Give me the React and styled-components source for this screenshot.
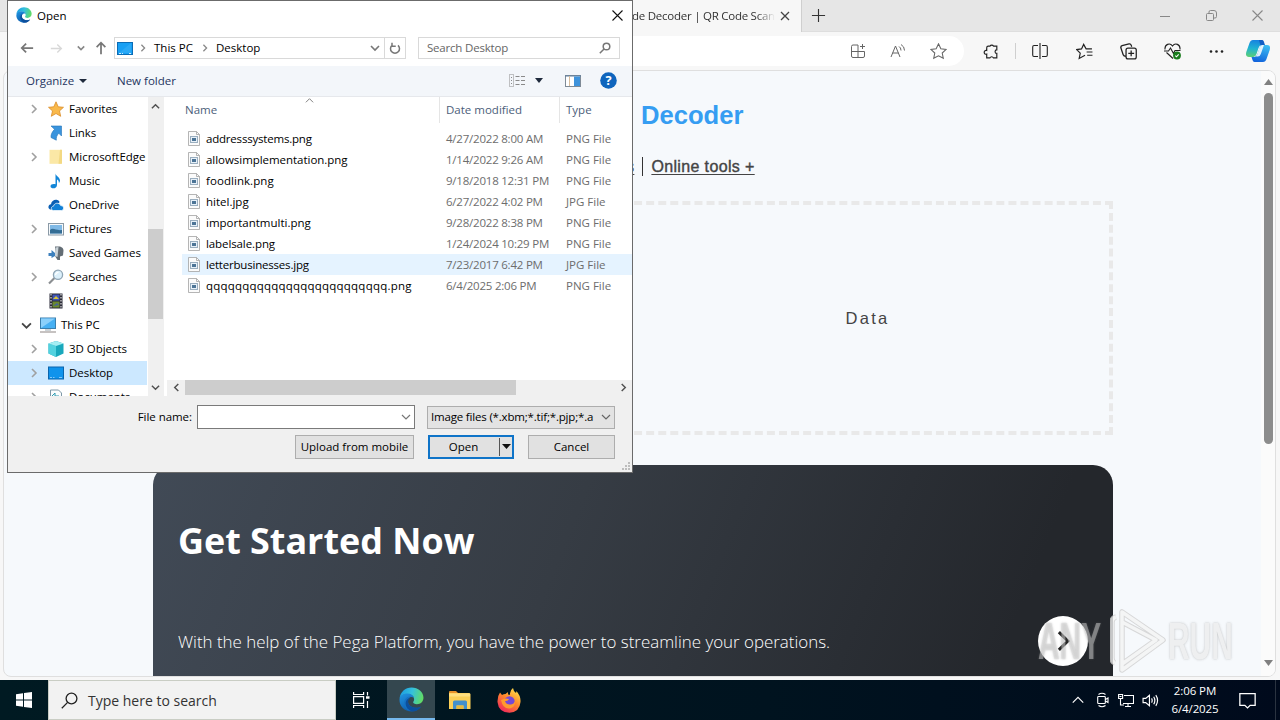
import React from "react";
import styled, { createGlobalStyle } from "styled-components";

const GlobalStyle = createGlobalStyle`
    * {
        box-sizing: border-box;
    }

    body {
        margin: 0;
        overflow: hidden;
        font-family: "Open Sans", "Noto Sans", sans-serif;
    }

    svg {
        display: block;
        flex: none;
    }
`;

const Screen = styled.div`
    position: relative;
    display: flex;
    flex-direction: column;
    width: 1280px;
    height: 720px;
    overflow: hidden;
    background: #f7f7f7;
`;

/* ---------- browser ---------- */

const Browser = styled.div`
    height: 680px;
    display: flex;
    flex-direction: column;
`;

const TabStrip = styled.div`
    height: 32px;
    display: flex;
    background: #e6e6e6;
    border-bottom: 1px solid #dedede;
`;

const Tab = styled.div`
    display: flex;
    align-items: center;
    height: 32px;
    width: 256px;
    margin-left: 546px;
    padding-left: 86px;
    background: #f7f7f7;
    border-right: 1px solid #cfcfcf;
    border-radius: 8px 0 0 0;
`;

const TabTitle = styled.span`
    width: 143px;
    margin-right: 5px;
    padding-bottom: 1px;
    white-space: nowrap;
    font-size: 11.5px;
    letter-spacing: -0.25px;
    color: #333;
    -webkit-mask-image: linear-gradient(90deg, #000 125px, transparent 143px);
    mask-image: linear-gradient(90deg, #000 125px, transparent 143px);
`;

const NewTab = styled.div`
    width: 32px;
    display: flex;
    align-items: center;
    justify-content: center;
`;

const WindowControls = styled.div`
    margin-left: auto;
    display: flex;
`;

const Cell = styled.div`
    width: ${(props) => props.$width || 44}px;
    margin-left: ${(props) => props.$gap || 0}px;
    flex: none;
    display: flex;
    align-items: center;
    justify-content: center;
`;

const Toolbar = styled.div`
    height: 38px;
    display: flex;
    align-items: center;
    background: #f7f7f7;
`;

const AddressBar = styled.div`
    height: 30px;
    width: 834px;
    margin: 0 5px 0 130px;
    padding-right: 6px;
    display: flex;
    align-items: center;
    justify-content: flex-end;
    background: #fff;
    border-radius: 15px;
`;

const Divider = styled.div`
    width: 1px;
    height: 16px;
    margin: 0 2px;
    background: #cfcfcf;
`;

const Page = styled.div`
    width: 1273px;
    height: 607px;
    margin-left: 3px;
    display: flex;
    overflow: hidden;
    background: #f6f9fc;
    border: 1px solid #dfdfdf;
    border-radius: 8px;
`;

const Content = styled.main`
    width: 960px;
    margin-left: 149px;
    margin-right: auto;
    display: flex;
    flex-direction: column;
    font-family: "Liberation Sans", Arial, sans-serif;
`;

const Heading = styled.h1`
    margin: 29px 0 0;
    padding-left: 488px;
    font-size: 25.6px;
    line-height: 30px;
    color: #359df2;
`;

const Links = styled.nav`
    display: flex;
    align-items: center;
    height: 20px;
    margin-top: 27px;
    padding-left: 473px;
    font-size: 16px;
    letter-spacing: 0.36px;
    -webkit-text-stroke: 0.4px #444;
    color: #444;
`;

const Link = styled.span`
    text-decoration: underline;
    text-underline-offset: 2px;
`;

const Bar = styled.span`
    width: 1px;
    height: 19px;
    margin: 0 8px;
    background: #333;
`;

const DropZone = styled.div`
    width: 491px;
    height: 234px;
    flex: none;
    margin: 25px 0 0 469px;
    display: flex;
    align-items: center;
    justify-content: center;
    border: 4px dashed #e9e9e9;
    font-size: 16.5px;
    letter-spacing: 2.3px;
    color: #444;
`;

const Card = styled.section`
    height: 230px;
    flex: none;
    margin-top: 30px;
    display: flex;
    flex-direction: column;
    padding: 51px 25px 0;
    background: linear-gradient(112deg, #414a56 0%, #363c44 42%, #24272c 88%);
    border-radius: 20px 20px 0 0;
    font-family: "Open Sans", sans-serif;
    color: #fff;
`;

const CardTitle = styled.h2`
    margin: 0;
    font-size: 35.9px;
    line-height: 50px;
`;

const CardRow = styled.div`
    height: 50px;
    margin-top: 50px;
    display: flex;
    align-items: center;
    justify-content: space-between;
    font-size: 16.92px;
    font-weight: 300;
    color: #fff;
`;

const NextButton = styled.div`
    width: 50px;
    height: 50px;
    display: flex;
    align-items: center;
    justify-content: center;
    background: #fff;
    border-radius: 50%;
`;

const PageScroll = styled.div`
    width: 14px;
    display: flex;
    flex-direction: column;
    align-items: center;
    justify-content: space-between;
    padding: 8px 0 10px;
    background: #fbfbfb;
`;

const PageThumb = styled.div`
    width: 9px;
    height: 351px;
    margin: 8px 0 auto;
    background: #8c8c8c;
    border-radius: 5px;
`;

/* ---------- file dialog ---------- */

const Dialog = styled.div`
    position: absolute;
    left: 7px;
    top: 0;
    width: 626px;
    height: 473px;
    display: flex;
    flex-direction: column;
    background: #fff;
    border: 1px solid #6b6b6b;
    font-size: 11.5px;
    color: #000;
    white-space: nowrap;
`;

const DialogTitle = styled.div`
    height: 29px;
    padding: 0 9px 1px 8px;
    display: flex;
    align-items: center;
    gap: 5px;

    svg:last-child {
        margin-left: auto;
    }
`;

const PathRow = styled.div`
    height: 36px;
    display: flex;
    padding: 7px 12px 0;
`;

const Arrows = styled.div`
    width: 94px;
    height: 22px;
    flex: none;
    display: flex;
    align-items: center;
`;

const PathBox = styled.div`
    width: 292px;
    height: 22px;
    display: flex;
    align-items: center;
    padding-left: 2px;
    border: 1px solid #d9d9d9;
`;

const Crumb = styled.span`
    width: ${(props) => props.$width}px;
    padding: 0 0 1px 1px;
`;

const Refresh = styled.div`
    width: 20px;
    height: 20px;
    margin-left: 4px;
    display: flex;
    align-items: center;
    justify-content: center;
    border-left: 1px solid #d9d9d9;
`;

const SearchBox = styled.div`
    width: 202px;
    height: 22px;
    margin-left: 12px;
    padding: 0 8px 1px 8px;
    display: flex;
    align-items: center;
    justify-content: space-between;
    border: 1px solid #d9d9d9;
    letter-spacing: -0.2px;
    color: #666;
`;

const CommandBar = styled.div`
    height: 31px;
    display: flex;
    align-items: center;
    padding: 0 15px 1px 18px;
    background: #f3f6fa;
    border-bottom: 1px solid #e6e8ec;
    color: #1e3560;
`;

const Command = styled.span`
    display: flex;
    align-items: center;
    gap: 5px;
    width: ${(props) => props.$width}px;
`;

const CommandIcons = styled.div`
    margin-left: auto;
    display: flex;
    align-items: center;
`;

const Panels = styled.div`
    height: 299px;
    display: flex;
`;

const Tree = styled.div`
    width: 139px;
    overflow: hidden;
`;

const TreeRow = styled.div`
    height: 24px;
    display: flex;
    align-items: center;
    padding-left: ${(props) => (props.$root ? 13 : 21)}px;
    background: ${(props) => (props.$active ? "#cce8ff" : "transparent")};
`;

const Caret = styled.span`
    width: 19px;
    display: flex;
`;

const TreeLabel = styled.span`
    margin-left: 5px;
    padding-bottom: 2px;
    letter-spacing: -0.04px;
`;

const TreeScroll = styled.div`
    width: 16px;
    margin-left: 1px;
    padding: 5px 1px 4px 0;
    display: flex;
    flex-direction: column;
    align-items: center;
    justify-content: space-between;
    background: #f0f0f0;
`;

const TreeThumb = styled.div`
    width: 15px;
    height: 90px;
    margin-top: 118px;
    margin-bottom: auto;
    background: #cdcdcd;
`;

const Files = styled.div`
    flex: 1;
    display: flex;
    flex-direction: column;
    margin-left: 3px;
`;

const FileHead = styled.div`
    height: 25px;
    margin-bottom: 6px;
    display: grid;
    grid-template-columns: 273px 120px 1fr;
    line-height: 26px;
    color: #4c607a;
`;

const HeadCell = styled.div`
    display: flex;
    padding-left: ${(props) => props.$pad || 6}px;
    border-right: 1px solid ${(props) => (props.$last ? "transparent" : "#e5e5e5")};

    svg {
        margin: -1px 0 0 88px;
    }
`;

const FileRow = styled.div`
    height: 21px;
    margin-left: 15px;
    padding-left: 6px;
    display: grid;
    grid-template-columns: 18px 240px 120px 1fr;
    align-items: center;
    background: ${(props) => (props.$hover ? "#e5f3ff" : "transparent")};
`;

const FileName = styled.span`
    letter-spacing: ${(props) => props.$spacing || 0}px;
`;

const Meta = styled.span`
    letter-spacing: ${(props) => props.$spacing || 0}px;
    color: #6d6d6d;
`;

const FileScroll = styled.div`
    height: 16px;
    margin-top: auto;
    padding: 0 4px 1px 5px;
    display: flex;
    align-items: center;
    justify-content: space-between;
    background: #f0f0f0;
`;

const FileThumb = styled.div`
    width: 331px;
    height: 15px;
    margin-right: auto;
    margin-left: 4px;
    background: #cdcdcd;
`;

const Footer = styled.div`
    position: relative;
    flex: 1;
    padding: 9px 17px 0 0;
    display: flex;
    flex-direction: column;
    align-items: flex-end;
    gap: 6px;
    background: #f0f0f0;
`;

const FooterRow = styled.div`
    display: flex;
    align-items: center;
    line-height: 20px;
`;

const FieldLabel = styled.span`
    letter-spacing: -0.05px;
`;

const NameInput = styled.div`
    width: 218px;
    height: 24px;
    margin: 0 12px 0 5px;
    padding-right: 3px;
    display: flex;
    align-items: center;
    justify-content: flex-end;
    background: #fff;
    border: 1px solid #7a7a7a;
`;

const TypeSelect = styled.div`
    width: 188px;
    height: 23px;
    padding: 0 3px 0 3px;
    display: flex;
    align-items: center;
    justify-content: space-between;
    background: #e3e3e3;
    border: 1px solid #adadad;
    letter-spacing: -0.18px;
`;

const Button = styled.div`
    width: ${(props) => props.$width}px;
    height: 24px;
    margin-left: 14px;
    padding-bottom: 1px;
    display: flex;
    align-items: center;
    justify-content: center;
    background: #e1e1e1;
    border: ${(props) => (props.$primary ? "2px solid #0f74c8" : "1px solid #adadad")};
`;

const OpenLabel = styled.span`
    width: 70px;
    padding-right: 2px;
    text-align: center;
`;

const SplitArrow = styled.span`
    height: 18px;
    width: 13px;
    display: flex;
    align-items: center;
    justify-content: center;
    border-left: 1px solid #555;
`;

const Grip = styled.svg`
    position: absolute;
    right: 1px;
    bottom: 1px;
`;

/* ---------- taskbar ---------- */

const Taskbar = styled.div`
    height: 40px;
    display: flex;
    background: linear-gradient(90deg, #001a22, #00131f 60%, #000a1c);
    color: #fff;
`;

const TaskSearch = styled.div`
    width: 288px;
    display: flex;
    align-items: center;
    gap: 10px;
    padding-left: 12px;
    background: #f2f2f2;
    border: 1px solid #c9cdc4;
    font-size: 14px;
    color: #333;
`;

const TaskButton = styled.div`
    width: ${(props) => props.$width || 49}px;
    height: 40px;
    display: flex;
    align-items: center;
    justify-content: center;
    background: ${(props) => (props.$active ? "#34474f" : "transparent")};
    border-bottom: ${(props) => (props.$active ? "2px solid #76b9ed" : "none")};
`;

const Tray = styled.div`
    margin-left: auto;
    padding-right: 4px;
    margin-right: 4px;
    height: 40px;
    display: flex;
    align-items: center;
    border-right: 1px solid #2a3340;
`;

const Clock = styled.div`
    width: 66px;
    text-align: center;
    font-size: 11.5px;
    line-height: 18px;
    letter-spacing: -0.1px;
`;

const Watermark = styled.div`
    position: absolute;
    left: 1038px;
    top: 608px;
    display: flex;
    align-items: center;
    opacity: 0.78;
`;

const Word = styled.span`
    width: ${(props) => props.$width}px;
    height: 66px;
    line-height: 67px;
    font-family: "Liberation Sans", Arial, sans-serif;
    font-size: 52px;
    font-weight: bold;
    transform: scaleX(0.575);
    transform-origin: 0 50%;
    color: ${(props) => props.$color};
    text-shadow: 0 0 3px rgba(110, 110, 110, 0.55);
`;

/* ---------- icons ---------- */

const Stroke = ({ size = 16, color = "#333", w = 1, d, box = 16 }) => (
    <svg width={size} height={size} viewBox={`0 0 ${box} ${box}`} fill="none" stroke={color} strokeWidth={w}>
        <path d={d} />
    </svg>
);

const Chevron = ({ dir = "right", size = 9, color = "#999", w = 1.6 }) => {
    const paths = {
        right: "M3 1 L7 5 L3 9",
        left: "M7 1 L3 5 L7 9",
        down: "M1 3 L5 7 L9 3",
        up: "M1 7 L5 3 L9 7",
    };
    return <Stroke size={size} color={color} w={w} d={paths[dir]} box={10} />;
};

const Triangle = ({ up, w = 9, h = 5, color = "#1f2a3c" }) => (
    <svg width={w} height={h} viewBox="0 0 10 6" preserveAspectRatio="none" fill={color}>
        <path d={up ? "M0 6 L5 0 L10 6Z" : "M0 0 H10 L5 6Z"} />
    </svg>
);

const EdgeLogo = ({ size, id }) => (
    <svg width={size} height={size} viewBox="0 0 24 24">
        <defs>
            <linearGradient id={id + "a"} x1="0" y1="0.3" x2="1" y2="0.5">
                <stop offset="0" stopColor="#1b9de2" />
                <stop offset="0.5" stopColor="#35c1dc" />
                <stop offset="1" stopColor="#62dc63" />
            </linearGradient>
            <linearGradient id={id + "b"} x1="0" y1="0" x2="0.6" y2="1">
                <stop offset="0" stopColor="#2196e3" />
                <stop offset="1" stopColor="#0d58a8" />
            </linearGradient>
        </defs>
        <path d="M.6 11C1.2 4.8 6 .5 12 .5c6.400 0 11.500 4.400 11.500 9.800 0 3.600-2.800 6.200-6.300 6.200-2.300 0-3.600-.9-3.600-1.800 0-.7.9-1.200.9-2.700C14.500 8.700 11.500 6.700 8 6.700 4.300 6.700 1.500 8.800.6 11z" fill={`url(#${id}a)`} />
        <path d="M.5 12C.7 8.600 4 6.300 8 6.300c3.200 0 5.800 1.600 6.400 4.100-3.600-2-5.800.4-5.800 3.200 0 3.900 3.500 6.300 8 6.300 1.700 0 3.400-.6 4.700-1.300-1.900 3-5.400 4.900-9.300 4.900C5.400 23.500.2 18.400.5 12z" fill={`url(#${id}b)`} />
        <path d="M11.500 9.200c-2.800.5-4.600 3-4.600 6 0 4 2.800 7 6.300 8.100-5-.2-8.200-4-8.200-8 0-3.400 2.800-6.600 6.500-6.100z" fill="#1472c4" />
        <path d="M11 10.200c-1.800 1-2.400 2.900-2.200 4.500.4 3.200 3.700 5.200 7.800 5.200 2 0 3.600-.6 4.600-1.300-2 3-5 4.800-8 4.700C9 22.700 6.400 19.600 6.400 15.800c0-2.700 1.700-5.300 4.600-5.600z" fill="#0c4f9c" />
    </svg>
);

const Monitor = ({ w = 16, h = 13 }) => (
    <svg width={w} height={h} viewBox="0 0 16 13">
        <rect x="0.500" y="0.500" width="15" height="12" fill="#18a0f4" stroke="#0b6cb5" />
        <path d="M2 11 14 1v10z" fill="#47b6fa" opacity="0.400" />
        <path d="M2 11.500h2M5 11.500h1M12 11.500h2" stroke="#fff" strokeWidth="0.800" />
    </svg>
);

const FileIcon = () => (
    <svg width="12" height="15" viewBox="0 0 12 15">
        <path d="M.5.5h8l3 3v11H.5z" fill="#fbfbfb" stroke="#a2a2a2" strokeWidth="0.800" />
        <path d="M8.500.5v3h3" fill="none" stroke="#a2a2a2" strokeWidth="0.800" />
        <rect x="2.500" y="5.500" width="7" height="6" fill="#e7f0f8" stroke="#9aaebf" />
        <rect x="4" y="7" width="4" height="3" fill="#4c7496" />
    </svg>
);

const treeIcons = {
    star: <path d="M8 .8l2.200 5 5.300.5-4 3.600 1.200 5.400L8 12.500l-4.700 2.800 1.200-5.400-4-3.600 5.300-.5z" fill="#f9b94b" stroke="#d98d2b" strokeWidth="0.800" />,
    link: <path d="M3 1H13.500V11L10.800 8.300C9 10 8 12.500 8.300 15.200L3 12.500C2.800 9.500 4 7 6.500 4.300z" fill="#3a94dd" stroke="#2473b8" strokeWidth="0.600" />,
    folder: (
        <g>
            <path d="M1.500.8h12v14h-12z" fill="#fbe8a6" />
            <path d="M12 .8h2v14h-3.500z" fill="#f3d983" />
        </g>
    ),
    music: <path d="M7.500.5c.4 2.600 4.700 3.800 4.500 7.300-.1 1.200-.8 2-1.200 2.300.4-2.500-1.400-3.300-1.800-3.500V12c0 4.200-6.500 4.300-6.500 1.200 0-1.900 2.600-2.800 5-2z" fill="#1286d8" />,
    cloud: (
        <g>
            <path d="M.5 11c-.5-2.200 1-3.500 2.500-3.700C3.400 4 6.400 2.300 9.200 3c1.300.4 2 1.200 2.500 2L5 12.500H2z" fill="#0a5fb4" />
            <path d="M5.500 13.500c-3-.2-2.800-4.200 0-4.300.7-3.700 6-4 7.200-.6 3.400-.2 4 4.500.8 4.900z" fill="#1180d6" stroke="#fff" strokeWidth="0.700" />
        </g>
    ),
    picture: (
        <g>
            <rect x="0.500" y="2.500" width="15" height="11.500" fill="#f4f8fb" stroke="#8b9aa6" />
            <rect x="2" y="4" width="12" height="8.500" fill="#7fb9e6" />
            <path d="M2 9c3-3 6 1 12 0v3.500H2z" fill="#346d95" />
        </g>
    ),
    games: (
        <g>
            <path d="M7 1.500h5q3.500 1 3.500 4l-.5 5-3 1v3.500H9.500l-2.500-4z" fill="#636d75" />
            <path d="M7.500 2.500l3-.5-1 10-3-1z" fill="#c9d2d8" />
            <path d="M.5 8h3V5l3.500 3v3L3.500 13v-2h-3z" fill="#3d80bd" />
        </g>
    ),
    search: (
        <g fill="none">
            <path d="M1 14.500 6.500 9" stroke="#8b8f92" strokeWidth="2.200" />
            <circle cx="10" cy="5.800" r="4.600" fill="#dcf0fb" stroke="#8fa5b5" strokeWidth="1.300" />
            <path d="M7.500 6c.4-2 1.600-2.600 3-2.600" stroke="#fff" strokeWidth="1.200" />
        </g>
    ),
    video: (
        <g>
            <rect x="1.500" y="0.500" width="13" height="15" fill="#2b2b38" />
            <path d="M3 1v14M13 1v14" stroke="#dcdcdc" strokeWidth="1.200" strokeDasharray="1.500 1.500" />
            <rect x="4.500" y="1.500" width="7" height="6" fill="#3f54b8" />
            <rect x="4.500" y="8.500" width="7" height="6" fill="#6b8a2e" />
            <path d="M5 6l3-3 3 3z" fill="#d8c53a" />
            <path d="M5 13l4-3 2 2z" fill="#45639d" />
        </g>
    ),
    pc: (
        <g>
            <rect x="0.500" y="1" width="15" height="10.500" fill="#47b0f3" stroke="#3a7fae" />
            <path d="M1 11V1.500h14z" fill="#8bd0fb" />
            <path d="M5 13h6" stroke="#9aa7b0" />
            <path d="M0 15h16" stroke="#8d8583" />
        </g>
    ),
    cube: (
        <g>
            <path d="M8 0l7.500 2.500v10L8 16 .5 12.500v-10z" fill="#19a8bc" />
            <path d="M.5 2.500L8 5v11L.5 12.500z" fill="#53d2df" />
            <path d="M8 0l7.500 2.500L8 5 .5 2.500z" fill="#a5eef3" />
        </g>
    ),
    desktop: (
        <g>
            <rect x="0.500" y="2" width="15" height="12" fill="#0f93ec" stroke="#0b65ad" />
            <path d="M2 12.500h2M5 12.500h1.500M11 12.500h3" stroke="#9bd6ff" strokeWidth="0.800" />
        </g>
    ),
    document: (
        <g>
            <path d="M2.500 1h8l3 3v12h-11z" fill="#fafcfd" stroke="#7e98a8" />
            <path d="M4 7l3-3v3h4M8 8v4M4 10h7" stroke="#2f9ab0" fill="none" />
        </g>
    ),
};

const tree = [
    { label: "Favorites", icon: "star", caret: true },
    { label: "Links", icon: "link" },
    { label: "MicrosoftEdge", icon: "folder", caret: true },
    { label: "Music", icon: "music" },
    { label: "OneDrive", icon: "cloud" },
    { label: "Pictures", icon: "picture", caret: true },
    { label: "Saved Games", icon: "games" },
    { label: "Searches", icon: "search", caret: true },
    { label: "Videos", icon: "video" },
    { label: "This PC", icon: "pc", caret: true, root: true },
    { label: "3D Objects", icon: "cube", caret: true },
    { label: "Desktop", icon: "desktop", caret: true, active: true },
    { label: "Documents", icon: "document", caret: true },
];

const files = [
    { name: "addresssystems.png", date: "4/27/2022 8:00 AM", type: "PNG File", spacing: -0.2 },
    { name: "allowsimplementation.png", date: "1/14/2022 9:26 AM", type: "PNG File", spacing: -0.04 },
    { name: "foodlink.png", date: "9/18/2018 12:31 PM", type: "PNG File", spacing: 0.06 },
    { name: "hitel.jpg", date: "6/27/2022 4:02 PM", type: "JPG File" },
    { name: "importantmulti.png", date: "9/28/2022 8:38 PM", type: "PNG File" },
    { name: "labelsale.png", date: "1/24/2024 10:29 PM", type: "PNG File", spacing: -0.1 },
    { name: "letterbusinesses.jpg", date: "7/23/2017 6:42 PM", type: "JPG File", spacing: -0.2, hover: true },
    { name: "qqqqqqqqqqqqqqqqqqqqqqqqq.png", date: "6/4/2025 2:06 PM", type: "PNG File", spacing: 0.22 },
];

const BrowserWindow = () => (
    <Browser>
        <TabStrip>
            <Tab>
                <TabTitle>de Decoder | QR Code Scan</TabTitle>
                <Stroke size={10} color="#444" w={1.3} d="M1 1 9 9M9 1 1 9" box={10} />
            </Tab>
            <NewTab>
                <Stroke size={15} color="#333" w={1.2} d="M8 1v14M1 8h14" />
            </NewTab>
            <WindowControls>
                <Cell $width={46}><Stroke size={10} color="#888" d="M0 5.500h10" box={10} /></Cell>
                <Cell $width={46}><Stroke size={11} color="#888" d="M.5 4.500q0-1 1-1h5q1 0 1 1v5q0 1-1 1h-5q-1 0-1-1zM3 3V2q0-1.500 1.500-1.500H8q2.500 0 2.500 2.500v3.500q0 1.500-1.500 1.500h-1" box={11} /></Cell>
                <Cell $width={46}><Stroke size={11} color="#888" w={1.1} d="M.5.5l10 10M10.500.5l-10 10" box={11} /></Cell>
            </WindowControls>
        </TabStrip>
        <Toolbar>
            <AddressBar>
                <Cell $width={40}>
                    <Stroke color="#666" d="M8 2H3Q1.500 2 1.500 3.500V13q0 1.500 1.500 1.500h10q1.500 0 1.500-1.500V8.500M8 2v12.500M1.500 8.500h13M12.500 1v5M10 3.500h5" />
                </Cell>
                <Cell $width={40}>
                    <Stroke color="#666" d="M1 14 5.500 3 10 14M2.500 10h6M9 3.500q2 1 2 4M11 1.500q3.500 2 3.500 6" />
                </Cell>
                <Cell $width={40}>
                    <Stroke size={17} color="#666" d="M8 .8l2.200 4.600 5 .6-3.700 3.400 1 5L8 12l-4.500 2.400 1-5L.8 6l5-.6z" />
                </Cell>
            </AddressBar>
            <Cell>
                <Stroke size={17} color="#222" w={1.1} d="M5 3h1.500a2 2 0 0 1 3.500 0h3v3.500a1.600 1.600 0 1 0 0 3.300V14H9.800a1.800 1.800 0 0 0-3.300 0H3.500v-3.500a1.800 1.800 0 1 1 0-3.400V4.500Q3.500 3 5 3z" />
            </Cell>
            <Divider />
            <Cell>
                <Stroke color="#222" w={1.1} d="M6 2.500H2Q.7 2.500.7 4v8q0 1.500 1.300 1.500h4M10 2.500h4q1.300 0 1.300 1.500v8q0 1.500-1.300 1.500h-4M8 0v16" />
            </Cell>
            <Cell>
                <Stroke size={17} color="#222" w={1.1} d="M8.500 11.500 3 14.500 4 9.500.7 6.200l4.500-.6L7.200 1.300 9.500 5.500H15M10 8.500h5.500M10.500 11.500h5" />
            </Cell>
            <Cell>
                <Stroke size={17} color="#222" w={1.200} d="M5.500 12.500Q3.500 12.500 3 11L.8 4.500Q.5 3 2 2.500L8.500.8Q10 .5 10.500 2l.5 1.500M7.500 4.800h6q1.800 0 1.800 1.800v6.600q0 1.800-1.800 1.800h-6q-1.800 0-1.800-1.800V6.600q0-1.800 1.800-1.800zM10.500 7v5.500M7.800 9.800h5.500" />
            </Cell>
            <Cell>
                <svg width="17" height="17" viewBox="0 0 17 17" fill="none" stroke="#222" strokeWidth="1.100">
                    <path d="M1 6.500C.5 1 6-.5 8.500 3 11-.5 16.500 1 16 6.500M2.500 9.500 9 15.500M0 8h4.500L6.500 5l3 5.500L11 7.500h5.500" />
                    <circle cx="13" cy="12.500" r="3.900" fill="#187c1c" stroke="none" />
                    <path d="M11.300 12.600l1.200 1.200 2.200-2.500" stroke="#fff" />
                </svg>
            </Cell>
            <Cell>
                <svg width="15" height="3" viewBox="0 0 15 3" fill="#222">
                    <circle cx="2" cy="1.500" r="1.300" />
                    <circle cx="7.500" cy="1.500" r="1.300" />
                    <circle cx="13" cy="1.500" r="1.300" />
                </svg>
            </Cell>
            <Cell $width={40}>
                <svg width="24" height="22" viewBox="0 0 24 22">
                    <defs>
                        <linearGradient id="copA" x1="0.400" y1="0" x2="0.300" y2="1">
                            <stop offset="0" stopColor="#1783e0" />
                            <stop offset="0.500" stopColor="#20b3d2" />
                            <stop offset="1" stopColor="#5ccf76" />
                        </linearGradient>
                        <linearGradient id="copB" x1="0.700" y1="0" x2="0.400" y2="1">
                            <stop offset="0" stopColor="#3bbdf2" />
                            <stop offset="1" stopColor="#1264dc" />
                        </linearGradient>
                    </defs>
                    <path d="M7 0h8.500Q17 0 17.500 2l1 3h-3q-2 0-3 3l-2 6q-1 3-3 3H3Q-1 17 .3 12L3.500 3Q4.500 0 7 0z" fill="url(#copA)" />
                    <path d="M13 0h3q1.500 0 2 2l1 3.500h-4.500z" fill="#125ec4" />
                    <path d="M17 22H8.500Q7 22 6.500 20l-1-3h3q2 0 3-3l2-6q1-3 3-3H21q4 0 2.700 5l-3.200 9Q19.500 22 17 22z" fill="url(#copB)" />
                    <path d="M10 16.500q1-1 1.500-2.500l2-6q.7-2 2.500-3h2l-3.200 9q-.9 2.500-3 2.500z" fill="#fff" opacity="0.850" />
                </svg>
            </Cell>
        </Toolbar>
        <Page>
            <Content>
                <Heading>Decoder</Heading>
                <Links>
                    <Link>s</Link>
                    <Bar />
                    <Link>Online tools +</Link>
                </Links>
                <DropZone>Data</DropZone>
                <Card>
                    <CardTitle>Get Started Now</CardTitle>
                    <CardRow>
                        With the help of the Pega Platform, you have the power to streamline your operations.
                        <NextButton>
                            <Stroke size={22} color="#222" w={2.200} d="M5 1.500 L11.500 8 L5 14.500" />
                        </NextButton>
                    </CardRow>
                </Card>
            </Content>
            <PageScroll>
                <Triangle up w={9} h={6} color="#808080" />
                <PageThumb />
                <Triangle w={9} h={6} color="#808080" />
            </PageScroll>
        </Page>
    </Browser>
);

const OpenDialog = () => (
    <Dialog>
        <DialogTitle>
            <EdgeLogo size={16} id="dlg" />
            <span>Open</span>
            <Stroke size={11} color="#111" w={1.100} d="M.5.5l10 10M10.500.5l-10 10" box={11} />
        </DialogTitle>
        <PathRow>
            <Arrows>
                <Cell $width={14}><Stroke size={14} color="#777" w={2} d="M15 8H2M7 3 2 8l5 5" /></Cell>
                <Cell $width={44}><Stroke size={13} color="#d8d8d8" w={1.700} d="M1 8h13M9 3l5 5-5 5" /></Cell>
                <Cell $width={5}><Chevron dir="down" size={8} color="#888" w={2} /></Cell>
                <Cell $width={14} $gap={11}><Stroke size={14} color="#777" w={2} d="M8 15V2M3 7l5-5 5 5" /></Cell>
            </Arrows>
            <PathBox>
                <Monitor />
                <Cell $width={20}><Chevron size={8} color="#888" /></Cell>
                <Crumb $width={41}>This PC</Crumb>
                <Cell $width={21}><Chevron size={8} color="#888" /></Cell>
                <Crumb $width={155}>Desktop</Crumb>
                <Chevron dir="down" size={10} color="#777" />
                <Refresh>
                    <Stroke size={12} color="#777" w={2} d="M12 4.500a6 6 0 1 1-8 0M4 1v4.500h5" />
                </Refresh>
            </PathBox>
            <SearchBox>
                Search Desktop
                <svg width="12" height="12" viewBox="0 0 12 12" fill="none" stroke="#777" strokeWidth="1.500">
                    <circle cx="7.500" cy="4.500" r="3.300" />
                    <path d="M5 7 .8 11.200" />
                </svg>
            </SearchBox>
        </PathRow>
        <CommandBar>
            <Command $width={91}>
                Organize <Triangle w={8} h={4} />
            </Command>
            <Command>New folder</Command>
            <CommandIcons>
                <svg width="17" height="13" viewBox="0 0 17 13" fill="none" stroke="#8a8a8a">
                    <rect x="0.500" y="0.500" width="4" height="12" strokeDasharray="1 1" />
                    <path d="M6.500 2.500h4M12 2.500h4M6.500 6.500h4M12 6.500h4M6.500 10.500h4M12 10.500h4M2 3.500h1M2 6.500h1M2 9.500h1" />
                </svg>
                <Cell $width={26}><Triangle w={8} /></Cell>
                <Cell $width={42}>
                    <svg width="16" height="12" viewBox="0 0 16 12">
                        <rect x="0.500" y="0.500" width="15" height="11" fill="#fff" stroke="#7e8a96" />
                        <path d="M0 1h16" stroke="#5f7f9e" />
                        <path d="M4.500 1v10" stroke="#d9bd9c" />
                        <rect x="9" y="1.500" width="6" height="9.500" fill="#3f93dc" />
                    </svg>
                </Cell>
                <Cell $width={17} $gap={6}>
                    <svg width="17" height="17" viewBox="0 0 16 16">
                        <circle cx="8" cy="8" r="7.800" fill="#0f65bd" />
                        <text x="8" y="12.300" textAnchor="middle" fontSize="12" fontWeight="bold" fill="#fff">?</text>
                    </svg>
                </Cell>
            </CommandIcons>
        </CommandBar>
        <Panels>
            <Tree>
                {tree.map((item) => (
                    <TreeRow key={item.label} $root={item.root} $active={item.active}>
                        <Caret>
                            {item.caret && <Chevron dir={item.root ? "down" : "right"} size={item.root ? 11 : 10} color={item.root ? "#444" : "#a0a0a0"} />}
                        </Caret>
                        <svg width="16" height="16" viewBox="0 0 16 16">{treeIcons[item.icon]}</svg>
                        <TreeLabel>{item.label}</TreeLabel>
                    </TreeRow>
                ))}
            </Tree>
            <TreeScroll>
                <Chevron dir="up" color="#505050" />
                <TreeThumb />
                <Chevron dir="down" color="#505050" />
            </TreeScroll>
            <Files>
                <FileHead>
                    <HeadCell $pad={18}>
                        Name
                        <Chevron dir="up" color="#808080" w={1.100} />
                    </HeadCell>
                    <HeadCell>Date modified</HeadCell>
                    <HeadCell $last>Type</HeadCell>
                </FileHead>
                {files.map((file) => (
                    <FileRow key={file.name} $hover={file.hover}>
                        <FileIcon />
                        <FileName $spacing={file.spacing}>{file.name}</FileName>
                        <Meta $spacing={-0.22}>{file.date}</Meta>
                        <Meta>{file.type}</Meta>
                    </FileRow>
                ))}
                <FileScroll>
                    <Chevron dir="left" color="#505050" />
                    <FileThumb />
                    <Chevron color="#505050" />
                </FileScroll>
            </Files>
        </Panels>
        <Footer>
            <FooterRow>
                <FieldLabel>File name:</FieldLabel>
                <NameInput>
                    <Chevron dir="down" size={10} color="#777" w={1.200} />
                </NameInput>
                <TypeSelect>
                    Image files (*.xbm;*.tif;*.pjp;*.a
                    <Chevron dir="down" size={10} color="#666" w={1.200} />
                </TypeSelect>
            </FooterRow>
            <FooterRow>
                <Button $width={119}>Upload from mobile</Button>
                <Button $width={86} $primary>
                    <OpenLabel>Open</OpenLabel>
                    <SplitArrow><Triangle w={9} h={5} color="#111" /></SplitArrow>
                </Button>
                <Button $width={87}>Cancel</Button>
            </FooterRow>
            <Grip width="10" height="10" viewBox="0 0 10 10" fill="#bdbdbd">
                <path d="M7 1h2v2H7zM4 4h2v2H4zM7 4h2v2H7zM1 7h2v2H1zM4 7h2v2H4zM7 7h2v2H7z" />
            </Grip>
        </Footer>
    </Dialog>
);

const BottomBar = () => (
    <Taskbar>
        <TaskButton $width={48}>
            <svg width="16" height="16" viewBox="0 0 16 16" fill="#fff">
                <path d="M0 2.300 7 1.300V7.500H0zM8 1.100 16 0v7.500H8zM0 8.500h7v6.200L0 13.700zM8 8.500h8V16l-8-1.100z" />
            </svg>
        </TaskButton>
        <TaskSearch>
            <svg width="17" height="17" viewBox="0 0 17 17" fill="none" stroke="#222" strokeWidth="1.300">
                <circle cx="10.500" cy="6.500" r="5.400" />
                <path d="M6.600 10.400.8 16.200" />
            </svg>
            Type here to search
        </TaskSearch>
        <TaskButton $width={51}>
            <svg width="18" height="16" viewBox="0 0 18 16" fill="none" stroke="#fff" strokeWidth="1.200">
                <path d="M.6 0v2.500h10V0M.6 16v-2.500h10V16M.6 4.600h10v6.800H.6zM14.500 0v3.500M14.500 9v7" />
                <path d="M13 5.500h3.500" strokeWidth="2.500" />
            </svg>
        </TaskButton>
        <TaskButton $width={48} $active>
            <EdgeLogo size={25} id="task" />
        </TaskButton>
        <TaskButton>
            <svg width="22" height="19" viewBox="0 0 22 19">
                <path d="M0 1q0-1 1-1h6l2 2H0z" fill="#e8912a" />
                <path d="M0 2h20q1.500 0 1.500 1.500V18H0z" fill="#fbcf57" />
                <path d="M0 2.500h21v3H0z" fill="#ffdf80" />
                <path d="M4 11q0-1.500 1.500-1.500h11q1.500 0 1.500 1.500v7h-3.500v-3.500h-7V18H4z" fill="#4290cc" />
                <path d="M7.500 14.500h7V18h-7z" fill="#e7b93e" />
            </svg>
        </TaskButton>
        <TaskButton>
            <svg width="24" height="25" viewBox="0 0 24 25">
                <defs>
                    <linearGradient id="fox" x1="0.850" y1="0.050" x2="0.250" y2="1">
                        <stop offset="0" stopColor="#ffe14a" />
                        <stop offset="0.450" stopColor="#ff8a2b" />
                        <stop offset="1" stopColor="#f0265c" />
                    </linearGradient>
                </defs>
                <path d="M3 4.500l2 2.500q1.500-1 3.500-1L11 4q-.5 2 1 3l1-.5q-.5-4 3-6.500.3 3 3 5 .5-1 .3-2Q24 8 23.500 14q-.8 10-11 10.800Q1.500 24.500.5 14 .3 8 3 4.500z" fill="url(#fox)" />
                <circle cx="12.500" cy="13.500" r="5.200" fill="#7549d6" />
                <path d="M4 12q4-2.500 8-1-1 2.500-4 2 1 4 6 3.500 3.500-.5 4-4 1 6-5 8-7 1-9-8.500z" fill="#ff9a2e" />
            </svg>
        </TaskButton>
        <Tray>
            <Cell $width={24}><Stroke size={12} color="#fff" w={1.500} d="M1 11.500 8 4.500l7 7" /></Cell>
            <Cell $width={24}>
                <svg width="14" height="16" viewBox="-1 0 14 16" fill="none" stroke="#fff" strokeWidth="1.100">
                    <path d="M2.500 2.500Q6 0 9.500 2.500M2.500 13.500Q6 16 9.500 13.500M2.500 4.500h6q.8 0 .8.800v5.400q0 .8-.8.800h-6q-.8 0-.8-.8V5.300q0-.8.8-.8zM9.500 7.500l2.500-1.500v4.500L9.500 9" />
                </svg>
            </Cell>
            <Cell $width={24}>
                <Stroke color="#fff" w={1.100} d="M6 3.500h9.500v8H5M10 11.500v3M7 14.500h6M.6 2.500h4v4h-4zM2.500 6.500v6.500H6M1.500 4.500h2" />
            </Cell>
            <Cell $width={24}>
                <Stroke size={17} color="#fff" w={1.100} d="M1 6h2.500L7 3v10L3.500 10H1zM9 6q1.200 2 0 4M11 4.500q2.200 3.500 0 7M13 3q3.300 5 0 10" />
            </Cell>
            <Clock>2:06 PM<br />6/4/2025</Clock>
            <Cell $width={38}>
                <Stroke size={17} color="#fff" w={1.200} d="M.8 1.500h14.400v11H10.500L8 15l-2.500-2.500H.8z" />
            </Cell>
            <Cell $width={5} />
        </Tray>
    </Taskbar>
);

const App = () => (
    <Screen>
        <GlobalStyle />
        <BrowserWindow />
        <BottomBar />
        <OpenDialog />
        <Watermark>
            <Word $width={72} $color="rgba(215, 215, 215, 0.6)">ANY</Word>
            <svg width="58" height="66" viewBox="0 0 58 66" fill="none" strokeLinejoin="round">
                <path d="M6 9q-4 1-4 5v36q0 4 3 5M12 4v58l41-30zM12 14l34 18-34 24" stroke="#cfcfcf" strokeWidth="5.500" />
                <path d="M6 9q-4 1-4 5v36q0 4 3 5M12 4v58l41-30zM12 14l34 18-34 24" stroke="#f4f4f4" strokeWidth="3.500" />
            </svg>
            <Word $width={66} $color="#ededed">RUN</Word>
        </Watermark>
    </Screen>
);

export default App;
